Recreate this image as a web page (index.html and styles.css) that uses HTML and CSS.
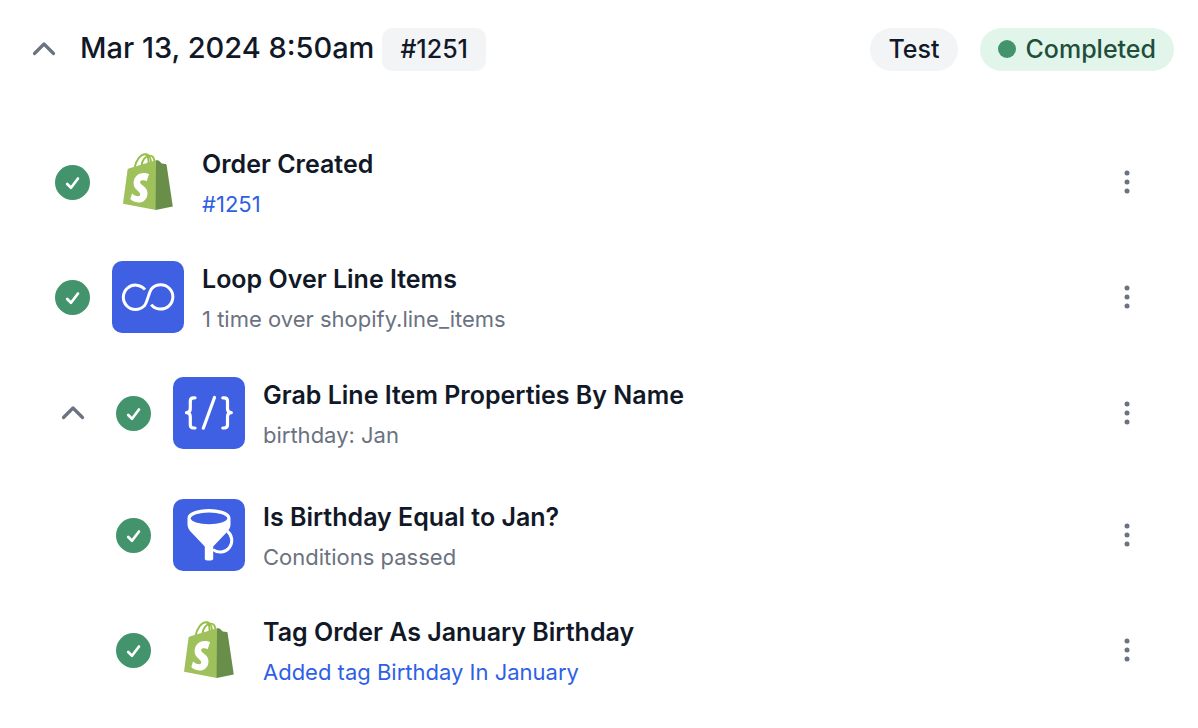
FILE: index.html
```html
<!DOCTYPE html>
<html lang="en">
<head>
    <meta charset="UTF-8">
    <meta name="viewport" content="width=device-width, initial-scale=1.0">
    <title>Run #1251</title>
    <link rel="stylesheet" href="styles.css">
</head>
<body>

    <!-- Shared icons -->
    <svg class="sprite" aria-hidden="true">
        <symbol id="chevron" viewBox="0 0 24 24">
            <path d="M2.500 16.500L12 7L21.500 16.500" fill="none" stroke="currentColor" stroke-width="3.200" stroke-linecap="round" stroke-linejoin="round"/>
        </symbol>
        <symbol id="check" viewBox="0 0 35 35">
            <circle cx="17.500" cy="17.500" r="17.500" fill="#43946c"/>
            <path d="M12.200 19L16 22.800L23 13.500" fill="none" stroke="#fff" stroke-width="2.700" stroke-linecap="round" stroke-linejoin="round"/>
        </symbol>
        <symbol id="dots" viewBox="0 0 24 24">
            <circle cx="12" cy="3" r="2.500"/>
            <circle cx="12" cy="12" r="2.500"/>
            <circle cx="12" cy="21" r="2.500"/>
        </symbol>
        <symbol id="shopify" viewBox="0 0 72 72">
            <g fill="none" stroke="#95bf47" stroke-width="1.900">
                <path d="M22.500 22C24 14 29 7.800 33.500 8.200C37.500 8.500 39.300 13 39 18"/>
                <path d="M29.500 20C30 14 33.500 9.800 37.500 9.600C40.500 9.500 42.300 12 42.500 16"/>
                <path d="M33.500 8.200C36.500 9.500 36.800 14 36.500 19"/>
            </g>
            <path fill="#9fc15c" d="M16.800 22.500L44 14.200V64L11 57.800L15.500 24.200Q15.700 22.900 16.800 22.500Z"/>
            <path fill="#688e49" d="M44 14.300Q46.500 14 47.200 15L49.800 17.600L53.600 18Q54.400 18.100 54.600 19L60.800 60.400L43.600 64Z"/>
            <path fill="#fff" d="M37 28.300L34.700 35.300C32.500 34.100 28.100 33.500 28.100 36.200C28.100 39.200 35.500 40.300 35.500 47.200C35.500 53 31.600 56.500 26.500 56.500C22.500 56.500 19.700 54.700 18.300 53.100L20 47.600C21.800 49.200 24.400 50.500 26.200 50.300C27.700 50.100 28.300 49.200 28.200 48C27.800 44.800 21.600 43.600 21.600 37.200C21.600 31.800 25.500 27 31.800 27C34.200 27 36.200 27.600 37 28.300Z"/>
        </symbol>
        <symbol id="loop" viewBox="0 0 72 72">
            <path d="M33 28.600A12.200 12.200 0 1 0 32.300 44.800C35.200 42 37 30.200 39.900 27.400A12.200 12.200 0 1 1 39.200 43.600" fill="none" stroke="#fff" stroke-width="3"/>
        </symbol>
        <symbol id="code" viewBox="0 0 72 72">
            <path d="M22 20.800H20.500Q17.300 20.800 17.300 24V31.500Q17.300 35.700 13.500 35.700Q17.300 35.700 17.300 40V47.800Q17.300 51 20.500 51H22M49.800 20.800H51.300Q54.500 20.800 54.500 24V31.500Q54.500 35.700 58.300 35.700Q54.500 35.700 54.500 40V47.800Q54.500 51 51.300 51H49.800M41.500 20.500L30.300 51.200" fill="none" stroke="#fff" stroke-width="3.200" stroke-linecap="round" stroke-linejoin="round"/>
        </symbol>
        <symbol id="funnel" viewBox="0 0 72 72">
            <path d="M54.300 32.200A11 11 0 0 1 40 50.600" fill="none" stroke="#fff" stroke-width="3"/>
            <path fill="#fff" d="M14.500 19C14.500 13.500 24 10 36 10S57.500 13.500 57.500 19V25.500C57.500 29 55.500 31.500 53.500 33.500L40.200 47.500V60C40.200 62 31.800 62 31.800 60V47.500L18.500 33.500C16.500 31.500 14.500 29 14.500 25.500Z"/>
            <ellipse cx="36" cy="19.300" rx="18.200" ry="5.900" fill="#4060e3"/>
        </symbol>
    </svg>

    <main class="run">
        <header class="run-header">
            <button type="button" class="toggle" aria-label="Collapse run"><svg><use href="#chevron"/></svg></button>
            <h1>Mar 13, 2024 8:50am</h1>
            <span class="badge">#1251</span>
            <span class="badge badge-pill">Test</span>
            <span class="badge badge-pill badge-success"><span class="dot"></span>Completed</span>
        </header>

        <ol class="steps">
            <li class="step">
                <svg class="check" role="img" aria-label="Success"><use href="#check"/></svg>
                <svg class="icon"><use href="#shopify"/></svg>
                <div class="step-text">
                    <h2>Order Created</h2>
                    <a href="#">#1251</a>
                </div>
                <button type="button" class="menu" aria-label="Step options"><svg><use href="#dots"/></svg></button>
            </li>
            <li class="step">
                <svg class="check" role="img" aria-label="Success"><use href="#check"/></svg>
                <svg class="icon icon-tile"><use href="#loop"/></svg>
                <div class="step-text">
                    <h2>Loop Over Line Items</h2>
                    <p>1 time over shopify.line_items</p>
                </div>
                <button type="button" class="menu" aria-label="Step options"><svg><use href="#dots"/></svg></button>
            </li>
            <li class="iteration">
                <button type="button" class="toggle" aria-label="Collapse iteration"><svg><use href="#chevron"/></svg></button>
                <ol class="steps">
                    <li class="step step-first">
                        <svg class="check" role="img" aria-label="Success"><use href="#check"/></svg>
                        <svg class="icon icon-tile"><use href="#code"/></svg>
                        <div class="step-text">
                            <h2>Grab Line Item Properties By Name</h2>
                            <p>birthday: Jan</p>
                        </div>
                        <button type="button" class="menu" aria-label="Step options"><svg><use href="#dots"/></svg></button>
                    </li>
                    <li class="step">
                        <svg class="check" role="img" aria-label="Success"><use href="#check"/></svg>
                        <svg class="icon icon-tile"><use href="#funnel"/></svg>
                        <div class="step-text">
                            <h2>Is Birthday Equal to Jan?</h2>
                            <p>Conditions passed</p>
                        </div>
                        <button type="button" class="menu" aria-label="Step options"><svg><use href="#dots"/></svg></button>
                    </li>
                    <li class="step">
                        <svg class="check" role="img" aria-label="Success"><use href="#check"/></svg>
                        <svg class="icon"><use href="#shopify"/></svg>
                        <div class="step-text">
                            <h2>Tag Order As January Birthday</h2>
                            <a href="#">Added tag Birthday In January</a>
                        </div>
                        <button type="button" class="menu" aria-label="Step options"><svg><use href="#dots"/></svg></button>
                    </li>
                </ol>
            </li>
        </ol>
    </main>

</body>
</html>
```
FILE: styles.css
```css
* {
    box-sizing: border-box;
}

body {
    margin: 0;
    font-family: Inter, sans-serif;
    color: #111827;
    background: #fff;
}

h1,
h2,
p,
ol {
    margin: 0;
    padding: 0;
}

ol {
    list-style: none;
}

button {
    display: flex;
    padding: 0;
    border: none;
    background: none;
    color: #6b7280;
    cursor: pointer;
}

.sprite {
    display: none;
}

.run {
    padding: 27px 24px;
}

/* Header */
.run-header {
    display: flex;
    align-items: center;
    height: 44px;
    padding-left: 8px;
}

.run-header h1 {
    margin: 0 8px 0 24px;
    padding-bottom: 2px;
    font-size: 29px;
    line-height: 40px;
    font-weight: 500;
}

.toggle svg {
    display: block;
    width: 24px;
    height: 24px;
}

.badge {
    display: flex;
    align-items: center;
    height: 43px;
    padding: 0 18px;
    border-radius: 10px;
    background: #f3f4f6;
    font-size: 25px;
    font-weight: 500;
}

.badge-pill {
    margin-left: auto;
    border-radius: 22px;
}

.badge-success {
    gap: 10px;
    margin-left: 22px;
    background: #e1f5eb;
    color: #204e3a;
}

.dot {
    width: 18px;
    height: 18px;
    border-radius: 50%;
    background: #43946c;
}

/* Steps */
.steps {
    display: flex;
    flex-direction: column;
    flex: 1;
    gap: 43px;
}

.run > .steps {
    padding: 75px 35px 0 31px;
}

.step {
    display: flex;
    align-items: center;
    height: 72px;
}

.step-first {
    margin-bottom: 7px;
}

.check {
    width: 35px;
    height: 35px;
    margin-right: 22px;
}

.icon {
    width: 72px;
    height: 72px;
    margin-right: 18px;
    border-radius: 10px;
}

.icon-tile {
    background: #4060e3;
}

.step-text {
    flex: 1;
    padding-top: 4px;
    line-height: 40px;
}

.step-text h2 {
    font-size: 25px;
    line-height: 40px;
    font-weight: 600;
}

.step-text p,
.step-text a {
    display: block;
    font-size: 22px;
    color: #6b7280;
}

.step-text a {
    color: #2f5fe6;
    text-decoration: none;
}

.menu svg {
    width: 24px;
    height: 24px;
    fill: currentColor;
}

.iteration {
    display: flex;
    align-items: flex-start;
    gap: 31px;
    padding: 1px 0 0 6px;
}

.iteration .toggle {
    height: 72px;
    align-items: center;
}
```
